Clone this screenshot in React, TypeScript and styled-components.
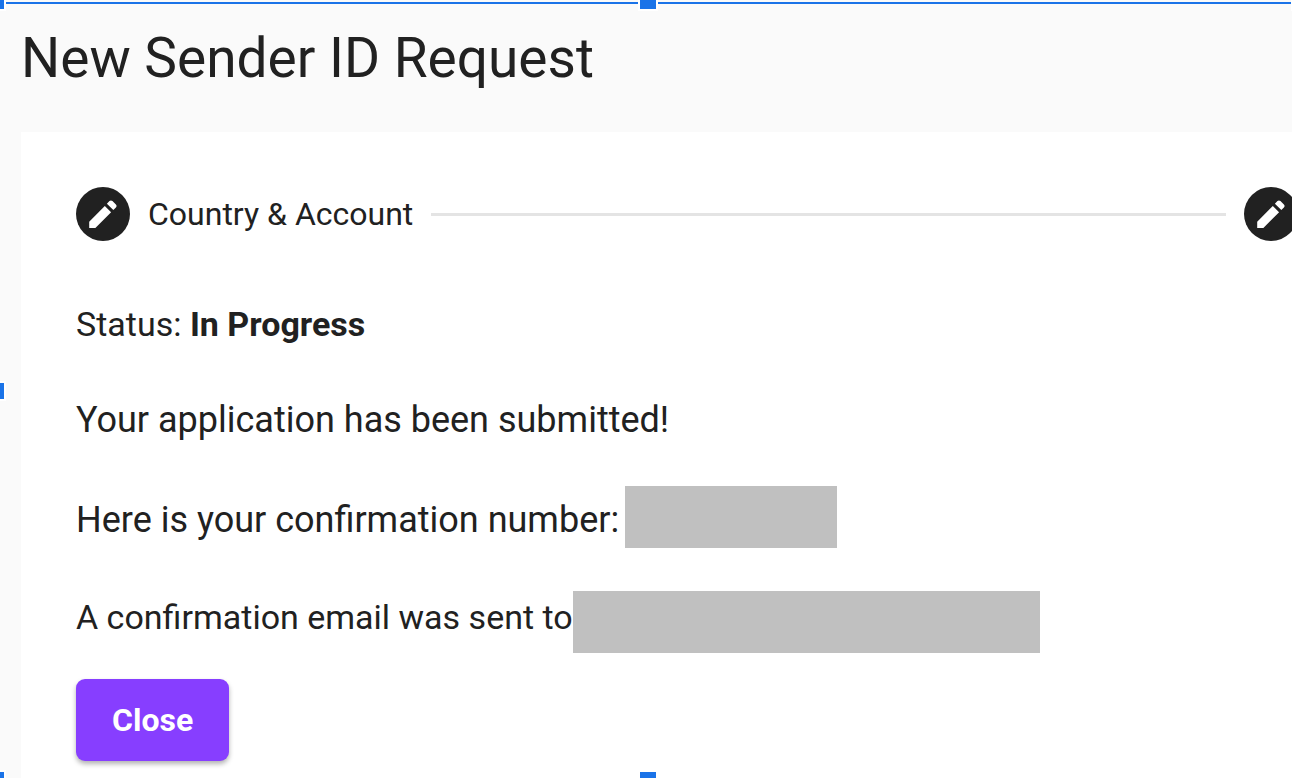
import React from "react";
import styled, { createGlobalStyle } from "styled-components";

const GlobalStyle = createGlobalStyle`
  * { box-sizing: border-box; }
  body {
    margin: 0;
    background: #fafafa;
    color: #212121;
    font-family: Roboto, "Liberation Sans", sans-serif;
    overflow: hidden;
  }
`;

const Page = styled.main`
  position: relative;
  display: flex;
  flex-direction: column;
  min-height: 100vh;
  padding: 28px 0 0 21px;
  overflow: hidden;
`;

const Title = styled.h1`
  margin: 0 0 44px;
  font-size: 55px;
  line-height: 60px;
  font-weight: 400;
`;

const Card = styled.section`
  flex: 1;
  padding: 55px 0 16px 55px;
  background: #fff;
`;

const Stepper = styled.ol`
  display: flex;
  align-items: center;
  gap: 18px;
  margin: 0 -6px 55px 0;
  padding: 0;
  list-style: none;
`;

const Step = styled.li`
  display: flex;
  flex: none;
  align-items: center;
  gap: 18px;
  font-size: 32px;
  line-height: 40px;
`;

const StepLine = styled.li`
  flex: 1;
  height: 3px;
  background: #e4e4e4;
`;

const StepIcon = styled.span`
  display: grid;
  place-items: center;
  width: 54px;
  height: 54px;
  border-radius: 50%;
  background: #212121;
  color: #fff;
`;

const Status = styled.p`
  margin: 0 0 40px;
  font-size: 34px;
  line-height: 56px;
`;

const Submitted = styled.p`
  margin: 0 0 38px;
  font-size: 36px;
  line-height: 56px;
`;

const Confirmation = styled.p`
  display: flex;
  align-items: flex-end;
  gap: 6px;
  margin: 0 0 43px;
  font-size: 36px;
  line-height: 56px;
`;

const EmailNotice = styled.p`
  display: flex;
  align-items: flex-start;
  margin: 0 0 26px;
  font-size: 34px;
  line-height: 52px;
`;

const Redacted = styled.span<{ $width: number }>`
  width: ${(p) => p.$width}px;
  height: 62px;
  background: #c0c0c0;
`;

const CloseButton = styled.button`
  display: block;
  height: 82px;
  padding: 0 36px;
  border: 0;
  border-radius: 9px;
  background: #873eff;
  color: #fff;
  font: 700 32px/40px Roboto, "Liberation Sans", sans-serif;
  box-shadow: 0 3px 5px rgba(0, 0, 0, 0.3);
`;

const SelectionEdge = styled.div`
  position: absolute;
  top: 2px;
  left: 0;
  right: 1px;
  height: 2px;
  background: #1a73e8;
`;

const Handle = styled.div<{ $x: string; $y: string }>`
  position: absolute;
  left: ${(p) => p.$x};
  top: ${(p) => p.$y};
  width: 20px;
  height: 20px;
  border: 2px solid #fff;
  background: #1a73e8;
  transform: translate(-50%, -50%);
`;

const handles = [
  { x: "-4px", y: "1px" },
  { x: "calc(50% + 2px)", y: "1px" },
  { x: "-4px", y: "calc(50% + 2px)" },
  { x: "-4px", y: "calc(100% + 2px)" },
  { x: "calc(50% + 2px)", y: "calc(100% + 2px)" },
  { x: "calc(100% + 9px)", y: "1px" },
];

function EditIcon() {
  return (
    <StepIcon>
      <svg width="36" height="36" viewBox="0 0 24 24" fill="currentColor" aria-hidden="true">
        <path d="M2.8 17.1V21.3H6.9L17.4 10.8 13.2 6.6zM14.6 5.1L16.3 3.4c.6-.6 1.4-.6 2 0L20.6 5.7c.6.6.6 1.4 0 2L18.9 9.4z" />
      </svg>
    </StepIcon>
  );
}

export default function App() {
  return (
    <>
      <GlobalStyle />
      <Page>
        <Title>New Sender ID Request</Title>
        <Card>
          <Stepper>
            <Step>
              <EditIcon />
              Country &amp; Account
            </Step>
            <StepLine aria-hidden="true" />
            <Step>
              <EditIcon />
            </Step>
          </Stepper>
          <Status>
            Status: <strong>In Progress</strong>
          </Status>
          <Submitted>Your application has been submitted!</Submitted>
          <Confirmation>
            Here is your confirmation number:
            <Redacted $width={212} />
          </Confirmation>
          <EmailNotice>
            A confirmation email was sent to
            <Redacted $width={467} />
          </EmailNotice>
          <CloseButton type="button">Close</CloseButton>
        </Card>
        <SelectionEdge />
        {handles.map((h) => (
          <Handle key={h.x + h.y} $x={h.x} $y={h.y} />
        ))}
      </Page>
    </>
  );
}
